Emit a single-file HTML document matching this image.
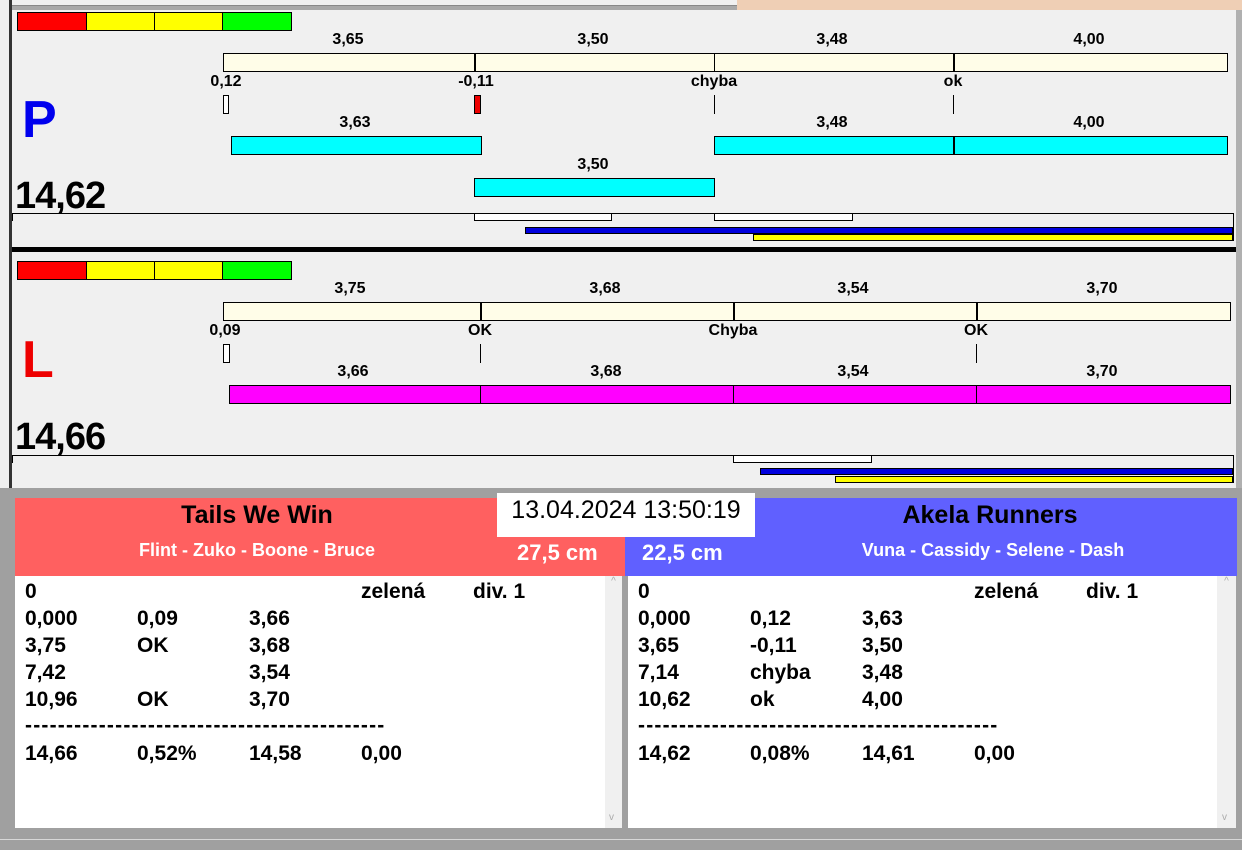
<!DOCTYPE html>
<html><head><meta charset="utf-8"><style>
*{margin:0;padding:0;box-sizing:border-box}
body{width:1242px;height:850px;overflow:hidden;background:#f0f0f0;position:relative;font-family:"Liberation Sans",Arial,sans-serif;font-weight:bold;color:#000}
div{position:absolute}
.l{font-size:16px;transform:translateX(-50%);white-space:nowrap;line-height:18px}
.b{border:1px solid #000}
.v{width:1px;background:#000}
.t{font-size:21px;line-height:24px;white-space:nowrap}
.d{letter-spacing:1.2px}
</style></head><body>
<div style="left:0;top:0;width:1242px;height:10px;background:#a8a8a8"></div>
<div style="left:12px;top:0;width:725px;height:6px;background:#f0f0f0;border-bottom:1px solid #888"></div>
<div style="left:737px;top:0;width:505px;height:12px;background:#efcfb5"></div>
<div style="left:0;top:0;width:12px;height:490px;background:#f0f0f0"></div>
<div style="left:9px;top:0;width:3px;height:490px;background:#333"></div>
<div style="left:12px;top:10px;width:1224px;height:478px;background:#f0f0f0"></div>
<div style="left:1236px;top:10px;width:6px;height:480px;background:#b0b0b0"></div>

<div class="b" style="left:17px;top:12px;width:70px;height:19px;background:#f00"></div>
<div class="b" style="left:86px;top:12px;width:69px;height:19px;background:#ff0"></div>
<div class="b" style="left:154px;top:12px;width:69px;height:19px;background:#ff0"></div>
<div class="b" style="left:222px;top:12px;width:70px;height:19px;background:#0f0"></div>
<div class="l" style="left:348px;top:31px">3,65</div>
<div class="l" style="left:593px;top:31px">3,50</div>
<div class="l" style="left:832px;top:31px">3,48</div>
<div class="l" style="left:1089px;top:31px">4,00</div>
<div class="b" style="left:223px;top:53px;width:1005px;height:19px;background:#fffde8"></div>
<div class="v" style="left:474px;top:53px;height:19px;width:2px"></div>
<div class="v" style="left:714px;top:53px;height:19px"></div>
<div class="v" style="left:953px;top:53px;height:19px;width:2px"></div>
<div class="l" style="left:226px;top:73px">0,12</div>
<div class="l" style="left:476px;top:73px">-0,11</div>
<div class="l" style="left:714px;top:73px">chyba</div>
<div class="l" style="left:953px;top:73px">ok</div>
<div class="b" style="left:223px;top:95px;width:6px;height:19px;background:#fff"></div>
<div class="b" style="left:474px;top:95px;width:7px;height:19px;background:#e00"></div>
<div class="v" style="left:714px;top:95px;height:19px"></div>
<div class="v" style="left:953px;top:95px;height:19px"></div>
<div style="left:22px;top:90px;font-size:52px;color:#0000ee;line-height:60px">P</div>
<div class="l" style="left:355px;top:114px">3,63</div>
<div class="l" style="left:832px;top:114px">3,48</div>
<div class="l" style="left:1089px;top:114px">4,00</div>
<div class="b" style="left:231px;top:136px;width:251px;height:19px;background:#0ff"></div>
<div class="b" style="left:714px;top:136px;width:514px;height:19px;background:#0ff"></div>
<div class="v" style="left:953px;top:136px;height:19px;width:2px"></div>
<div class="l" style="left:593px;top:156px">3,50</div>
<div class="b" style="left:474px;top:178px;width:241px;height:19px;background:#0ff"></div>
<div style="left:15px;top:174px;font-size:38px;line-height:44px;letter-spacing:-1px">14,62</div>
<div style="left:12px;top:213px;width:1222px;height:1px;background:#000"></div>
<div class="v" style="left:12px;top:213px;height:8px"></div>
<div class="v" style="left:1233px;top:213px;height:28px"></div>
<div class="b" style="left:474px;top:213px;width:138px;height:8px;background:#fff"></div>
<div class="b" style="left:714px;top:213px;width:139px;height:8px;background:#fff"></div>
<div class="b" style="left:525px;top:227px;width:708px;height:7px;background:#0000dd"></div>
<div class="b" style="left:753px;top:234px;width:480px;height:7px;background:#ff0"></div>
<div style="left:12px;top:247px;width:1224px;height:5px;background:#000"></div>

<div class="b" style="left:17px;top:261px;width:70px;height:19px;background:#f00"></div>
<div class="b" style="left:86px;top:261px;width:69px;height:19px;background:#ff0"></div>
<div class="b" style="left:154px;top:261px;width:69px;height:19px;background:#ff0"></div>
<div class="b" style="left:222px;top:261px;width:70px;height:19px;background:#0f0"></div>
<div class="l" style="left:350px;top:280px">3,75</div>
<div class="l" style="left:605px;top:280px">3,68</div>
<div class="l" style="left:853px;top:280px">3,54</div>
<div class="l" style="left:1102px;top:280px">3,70</div>
<div class="b" style="left:223px;top:302px;width:1008px;height:19px;background:#fffde8"></div>
<div class="v" style="left:480px;top:302px;height:19px;width:2px"></div>
<div class="v" style="left:733px;top:302px;height:19px;width:2px"></div>
<div class="v" style="left:976px;top:302px;height:19px;width:2px"></div>
<div class="l" style="left:225px;top:322px">0,09</div>
<div class="l" style="left:480px;top:322px">OK</div>
<div class="l" style="left:733px;top:322px">Chyba</div>
<div class="l" style="left:976px;top:322px">OK</div>
<div class="b" style="left:223px;top:344px;width:7px;height:19px;background:#fff"></div>
<div class="v" style="left:480px;top:344px;height:19px"></div>
<div class="v" style="left:976px;top:344px;height:19px"></div>
<div style="left:22px;top:330px;font-size:52px;color:#ee0000;line-height:60px">L</div>
<div class="l" style="left:353px;top:363px">3,66</div>
<div class="l" style="left:606px;top:363px">3,68</div>
<div class="l" style="left:853px;top:363px">3,54</div>
<div class="l" style="left:1102px;top:363px">3,70</div>
<div class="b" style="left:229px;top:385px;width:1002px;height:19px;background:#f0f"></div>
<div class="v" style="left:480px;top:385px;height:19px"></div>
<div class="v" style="left:733px;top:385px;height:19px"></div>
<div class="v" style="left:976px;top:385px;height:19px"></div>
<div style="left:15px;top:415px;font-size:38px;line-height:44px;letter-spacing:-1px">14,66</div>
<div style="left:12px;top:455px;width:1222px;height:1px;background:#000"></div>
<div class="v" style="left:12px;top:455px;height:8px"></div>
<div class="v" style="left:1233px;top:455px;height:28px"></div>
<div class="b" style="left:733px;top:455px;width:139px;height:8px;background:#fff"></div>
<div class="b" style="left:760px;top:468px;width:473px;height:7px;background:#0000dd"></div>
<div class="b" style="left:835px;top:476px;width:398px;height:7px;background:#ff0"></div>

<div style="left:0;top:488px;width:1242px;height:362px;background:#a0a0a0"></div>
<div style="left:15px;top:498px;width:610px;height:78px;background:#ff6060"></div>
<div style="left:625px;top:498px;width:612px;height:78px;background:#6060ff"></div>
<div style="left:497px;top:493px;width:258px;height:44px;background:#fff;font-weight:normal;font-size:25px;line-height:34px;text-align:center">13.04.2024 13:50:19</div>
<div style="left:0;top:499px;width:514px;text-align:center;font-size:25px;line-height:32px">Tails We Win</div>
<div style="left:0;top:538px;width:514px;text-align:center;font-size:18px;color:#fff;line-height:24px">Flint - Zuko - Boone - Bruce</div>
<div style="left:517px;top:539px;font-size:22px;color:#fff;line-height:28px">27,5 cm</div>
<div style="left:642px;top:539px;font-size:22px;color:#fff;line-height:28px">22,5 cm</div>
<div style="left:755px;top:499px;width:470px;text-align:center;font-size:25px;line-height:32px">Akela Runners</div>
<div style="left:760px;top:538px;width:466px;text-align:center;font-size:18px;color:#fff;line-height:24px">Vuna - Cassidy - Selene - Dash</div>

<div style="left:15px;top:576px;width:590px;height:252px;background:#fff"></div>
<div style="left:605px;top:576px;width:17px;height:252px;background:#f0f0f0;color:#aaa;font-size:10px;text-align:center;font-weight:normal">^<div style="left:4px;top:236px">v</div></div>
<div style="left:628px;top:576px;width:589px;height:252px;background:#fff"></div>
<div style="left:1217px;top:576px;width:19px;height:252px;background:#f0f0f0;color:#aaa;font-size:10px;text-align:center;font-weight:normal">^<div style="left:5px;top:236px">v</div></div>
<div style="left:0;top:839px;width:1242px;height:1px;background:#d8d8d8"></div>

<div class="t" style="left:25px;top:580px">0</div>
<div class="t" style="left:361px;top:580px">zelená</div>
<div class="t" style="left:473px;top:580px">div. 1</div>
<div class="t" style="left:25px;top:607px">0,000</div><div class="t" style="left:137px;top:607px">0,09</div><div class="t" style="left:249px;top:607px">3,66</div>
<div class="t" style="left:25px;top:634px">3,75</div><div class="t" style="left:137px;top:634px">OK</div><div class="t" style="left:249px;top:634px">3,68</div>
<div class="t" style="left:25px;top:661px">7,42</div><div class="t" style="left:249px;top:661px">3,54</div>
<div class="t" style="left:25px;top:688px">10,96</div><div class="t" style="left:137px;top:688px">OK</div><div class="t" style="left:249px;top:688px">3,70</div>
<div class="t d" style="left:25px;top:714px">--------------------------------------------</div>
<div class="t" style="left:25px;top:742px">14,66</div><div class="t" style="left:137px;top:742px">0,52%</div><div class="t" style="left:249px;top:742px">14,58</div><div class="t" style="left:361px;top:742px">0,00</div>

<div class="t" style="left:638px;top:580px">0</div>
<div class="t" style="left:974px;top:580px">zelená</div>
<div class="t" style="left:1086px;top:580px">div. 1</div>
<div class="t" style="left:638px;top:607px">0,000</div><div class="t" style="left:750px;top:607px">0,12</div><div class="t" style="left:862px;top:607px">3,63</div>
<div class="t" style="left:638px;top:634px">3,65</div><div class="t" style="left:750px;top:634px">-0,11</div><div class="t" style="left:862px;top:634px">3,50</div>
<div class="t" style="left:638px;top:661px">7,14</div><div class="t" style="left:750px;top:661px">chyba</div><div class="t" style="left:862px;top:661px">3,48</div>
<div class="t" style="left:638px;top:688px">10,62</div><div class="t" style="left:750px;top:688px">ok</div><div class="t" style="left:862px;top:688px">4,00</div>
<div class="t d" style="left:638px;top:714px">--------------------------------------------</div>
<div class="t" style="left:638px;top:742px">14,62</div><div class="t" style="left:750px;top:742px">0,08%</div><div class="t" style="left:862px;top:742px">14,61</div><div class="t" style="left:974px;top:742px">0,00</div>
</body></html>
